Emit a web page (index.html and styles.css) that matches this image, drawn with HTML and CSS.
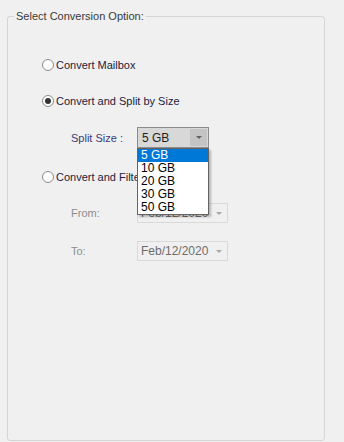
FILE: index.html
```html
<!DOCTYPE html>
<html lang="en">
<head>
    <meta charset="UTF-8">
    <title>Conversion Option</title>
    <link rel="stylesheet" href="styles.css">
</head>
<body>
    <fieldset class="group">
        <legend>Select Conversion Option:</legend>
        <div class="inner">
            <div class="opt first">
                <span class="radio"></span>
                <span class="opt-text">Convert Mailbox</span>
            </div>
            <div class="opt">
                <span class="radio checked"></span>
                <span class="opt-text">Convert and Split by Size</span>
            </div>
            <div class="field split">
                <span class="label">Split Size :</span>
                <div class="combo">
                    <span class="combo-text">5 GB</span>
                    <span class="combo-btn"><i class="arrow"></i></span>
                    <ul class="list">
                        <li class="current">5 GB</li>
                        <li>10 GB</li>
                        <li>20 GB</li>
                        <li>30 GB</li>
                        <li>50 GB</li>
                    </ul>
                </div>
            </div>
            <div class="opt third">
                <span class="radio"></span>
                <span class="opt-text">Convert and Filter by Date</span>
            </div>
            <div class="field from">
                <span class="label off">From:</span>
                <div class="date">
                    <span class="date-text">Feb/12/2020</span>
                    <i class="arrow light"></i>
                </div>
            </div>
            <div class="field to">
                <span class="label off">To:</span>
                <div class="date">
                    <span class="date-text">Feb/12/2020</span>
                    <i class="arrow light"></i>
                </div>
            </div>
        </div>
    </fieldset>
</body>
</html>
```

FILE: styles.css
```css
*{
    margin: 0;
    padding: 0;
    list-style: none;
    box-sizing: border-box;
}
body{
    background-color: #f0f0f0;
    font-family: "Liberation Sans", Arial, sans-serif;
    font-size: 11px;
    color: #1e1e1e;
    width: 344px;
    height: 442px;
    overflow: hidden;
}
.group{
    margin: 9px 0 0 7px;
    width: 318px;
    height: 432px;
    border: 1px solid #d5d5d5;
    border-radius: 3px;
    padding: 0;
}
.group legend{
    margin-left: 6px;
    padding: 0 2px;
    line-height: 14px;
    color: #3a3a3a;
}
.inner{
    padding-left: 34px;
}
.opt{
    display: flex;
    align-items: center;
    height: 20px;
    margin-top: 16px;
}
.opt.first{
    margin-top: 32px;
}
.opt.third{
    margin-top: 19px;
}
.radio{
    width: 12px;
    height: 12px;
    border: 1px solid #8a8a8a;
    border-radius: 50%;
    background-color: #fff;
    margin-right: 2px;
    display: flex;
    align-items: center;
    justify-content: center;
}
.radio.checked::after{
    content: "";
    width: 6px;
    height: 6px;
    border-radius: 50%;
    background-color: #333;
}
.opt-text{
    color: #1c1c3c;
    white-space: nowrap;
}
.field{
    display: flex;
    align-items: center;
    margin-left: 29px;
    margin-top: 16px;
}
.field.from{
    margin-top: 16px;
}
.field.to{
    margin-top: 18px;
}
.label{
    width: 66px;
    color: #3a3a7a;
}
.label.off{
    color: #8d8d8d;
}
.combo{
    position: relative;
    width: 72px;
    height: 21px;
    border: 1px solid #8c8c8c;
    background-color: #d8d8d8;
    display: flex;
    align-items: center;
    font-size: 12px;
}
.combo-text{
    flex: 1;
    padding-left: 4px;
}
.combo-btn{
    width: 17px;
    height: 17px;
    margin-right: 1px;
    background-color: #c4c4c4;
    display: flex;
    align-items: center;
    justify-content: center;
}
.arrow{
    width: 0;
    height: 0;
    border-left: 3px solid transparent;
    border-right: 3px solid transparent;
    border-top: 3px solid #606060;
}
.arrow.light{
    border-top-color: #a8a8a8;
    margin-right: 5px;
}
.list{
    position: absolute;
    left: -1px;
    top: 20px;
    width: 72px;
    background-color: #fff;
    border: 1px solid #646464;
    box-shadow: 2px 2px 2px rgba(0, 0, 0, 0.25);
    z-index: 2;
}
.list li{
    height: 13px;
    line-height: 13px;
    padding-left: 3px;
    color: #000;
}
.list .current{
    background-color: #0078d7;
    color: #fff;
}
.date{
    width: 91px;
    height: 20px;
    border: 1px solid #d9d9d9;
    display: flex;
    align-items: center;
    font-size: 12px;
}
.date-text{
    flex: 1;
    padding-left: 3px;
    color: #6d6d6d;
}
```
